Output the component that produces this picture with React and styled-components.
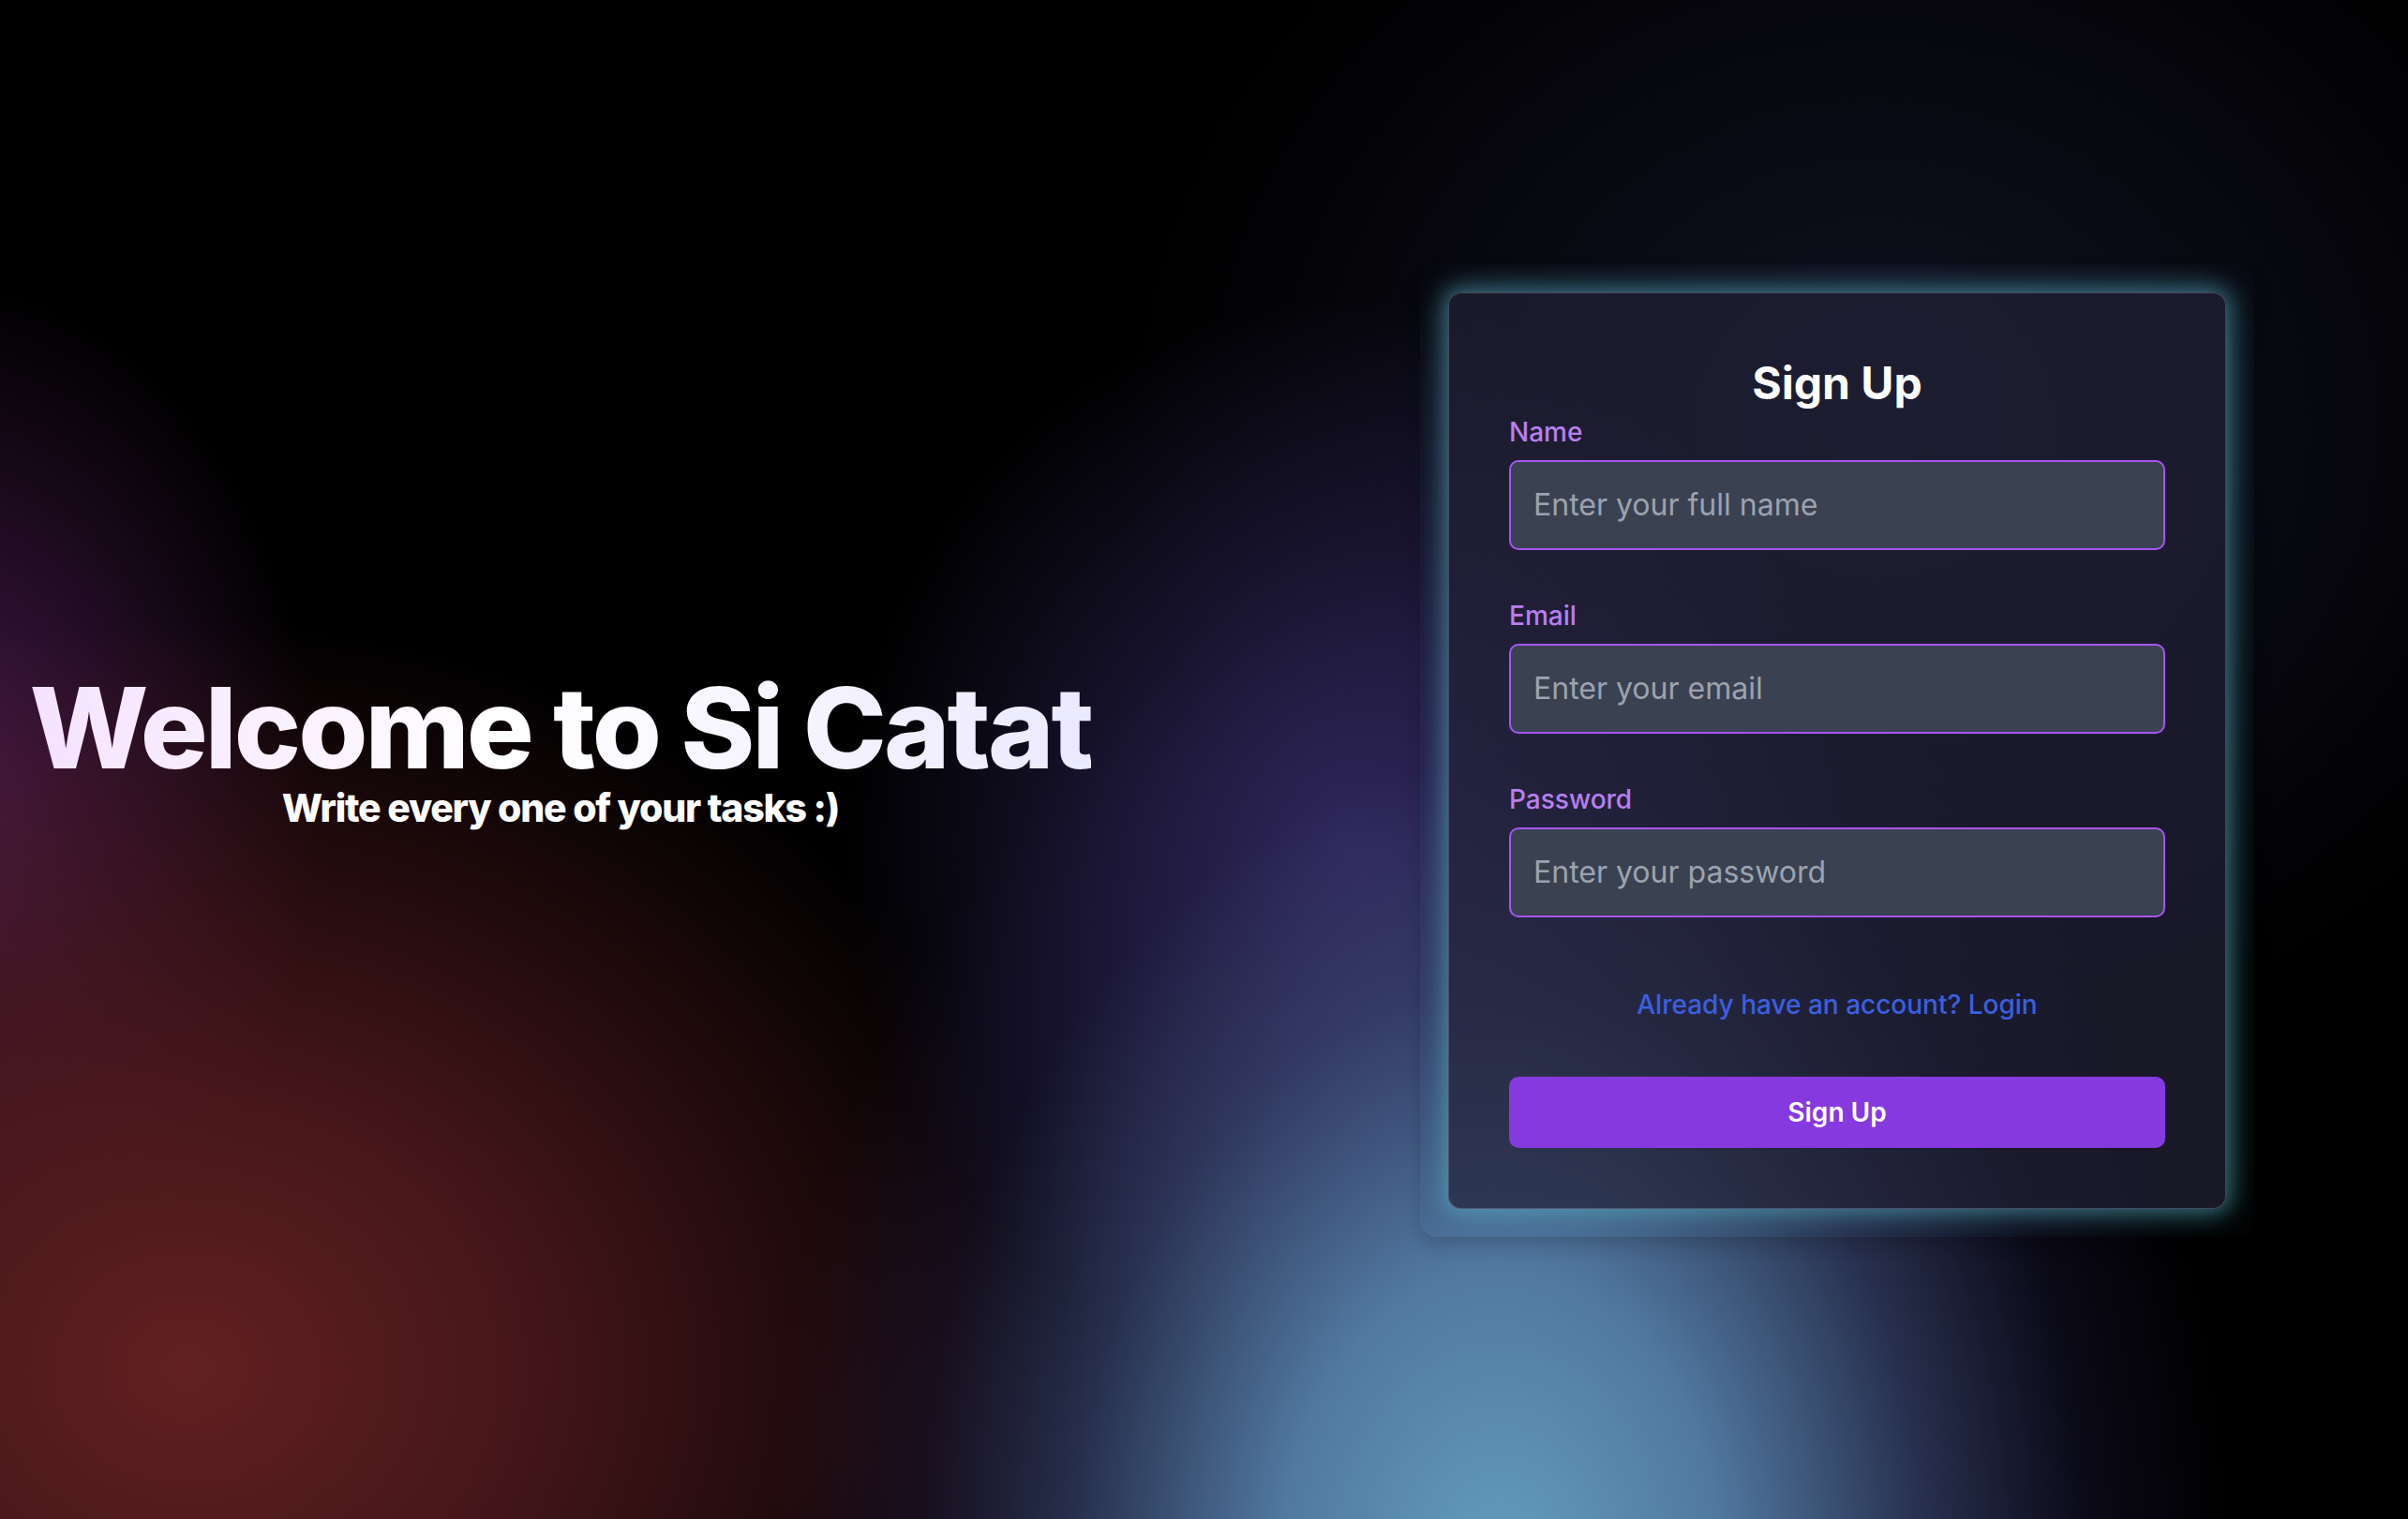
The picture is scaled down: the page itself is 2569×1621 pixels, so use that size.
import React from 'react';
import styled, { createGlobalStyle } from 'styled-components';

const GlobalStyle = createGlobalStyle`
  html, body {
    margin: 0;
    padding: 0;
    background: #000;
  }
  body {
    font-family: Inter, "Noto Sans", sans-serif;
  }
  * {
    box-sizing: border-box;
  }
`;

const Page = styled.div`
  min-height: 100vh;
  display: flex;
  align-items: center;
  padding-bottom: 20px;
  background:
    radial-gradient(780px 1080px at 1600px 1680px, rgba(100, 158, 190, 1) 0%, rgba(90, 134, 178, 0.9) 30%, rgba(66, 80, 130, 0.6) 58%, rgba(45, 40, 95, 0.25) 80%, transparent 100%),
    radial-gradient(540px 580px at 1440px 900px, rgba(58, 46, 110, 0.8), transparent 100%),
    radial-gradient(940px 800px at 200px 1460px, rgba(98, 32, 33, 1) 0%, rgba(84, 27, 31, 0.82) 38%, transparent 100%),
    radial-gradient(400px 560px at -60px 860px, rgba(82, 30, 88, 0.85), transparent 100%),
    radial-gradient(800px 700px at 2000px 450px, rgba(18, 18, 36, 1), transparent 100%),
    #000;
`;

const Hero = styled.div`
  width: 1196px;
  flex-shrink: 0;
  display: flex;
  flex-direction: column;
  align-items: center;
`;

const Heading = styled.h1`
  margin: 0;
  font-size: 120px;
  font-weight: 800;
  line-height: 1;
  letter-spacing: -0.025em;
  background: linear-gradient(90deg, #f5e2ff 0%, #ffffff 45%, #ebe9ff 100%);
  -webkit-background-clip: text;
  background-clip: text;
  color: transparent;
`;

const Tagline = styled.p`
  margin: 3px 0 0;
  font-size: 41px;
  font-weight: 800;
  line-height: 44px;
  letter-spacing: -0.03em;
  color: #fff;
`;

const Shell = styled.div`
  margin-left: 319px;
  padding: 30px;
  border-radius: 18px;
  overflow: hidden;
  box-shadow: 0 10px 18px rgba(0, 0, 0, 0.14);
`;

const Card = styled.form`
  width: 830px;
  padding: 64px;
  border: 1px solid rgba(92, 92, 122, 0.7);
  border-radius: 14px;
  background: rgba(34, 34, 56, 0.7);
  box-shadow:
    0 0 22px 4px rgba(88, 178, 196, 0.55),
    0 0 50px 8px rgba(70, 150, 175, 0.25);
  display: flex;
  flex-direction: column;
`;

const Title = styled.h2`
  margin: 0;
  font-size: 48px;
  line-height: 64px;
  font-weight: 700;
  text-align: center;
  color: #fff;
`;

const Field = styled.div`
  display: flex;
  flex-direction: column;
  margin-bottom: ${p => (p.$last ? '0' : '50px')};
`;

const Label = styled.label`
  font-size: 28px;
  line-height: 40px;
  font-weight: 500;
  color: #b97ff0;
  margin-bottom: 10px;
`;

const Input = styled.input`
  height: 96px;
  padding: 0 24px;
  border: 2px solid #a855f7;
  border-radius: 10px;
  background: #3a4151;
  color: #fff;
  font-family: inherit;
  font-size: 32px;
  outline: none;

  &::placeholder {
    color: #9ca3af;
  }
`;

const SwitchLink = styled.a`
  margin-top: 73px;
  font-size: 28px;
  line-height: 40px;
  font-weight: 500;
  text-align: center;
  color: #3b5fe0;
  text-decoration: none;
  cursor: pointer;
`;

const Submit = styled.button`
  margin-top: 57px;
  height: 76px;
  border: none;
  border-radius: 10px;
  background: #8739e0;
  color: #fff;
  font-family: inherit;
  font-size: 28px;
  font-weight: 600;
  cursor: pointer;
`;

const fields = [
  { id: 'name', label: 'Name', type: 'text', placeholder: 'Enter your full name' },
  { id: 'email', label: 'Email', type: 'email', placeholder: 'Enter your email' },
  { id: 'password', label: 'Password', type: 'password', placeholder: 'Enter your password' },
];

const App = () => {
  return (
    <>
      <GlobalStyle />
      <Page>
        <Hero>
          <Heading>Welcome to Si Catat</Heading>
          <Tagline>Write every one of your tasks :)</Tagline>
        </Hero>
        <Shell>
          <Card onSubmit={e => e.preventDefault()}>
            <Title>Sign Up</Title>
            {fields.map((f, i) => (
              <Field key={f.id} $last={i === fields.length - 1}>
                <Label htmlFor={f.id}>{f.label}</Label>
                <Input id={f.id} name={f.id} type={f.type} placeholder={f.placeholder} />
              </Field>
            ))}
            <SwitchLink>Already have an account? Login</SwitchLink>
            <Submit type="submit">Sign Up</Submit>
          </Card>
        </Shell>
      </Page>
    </>
  );
};

export default App;
